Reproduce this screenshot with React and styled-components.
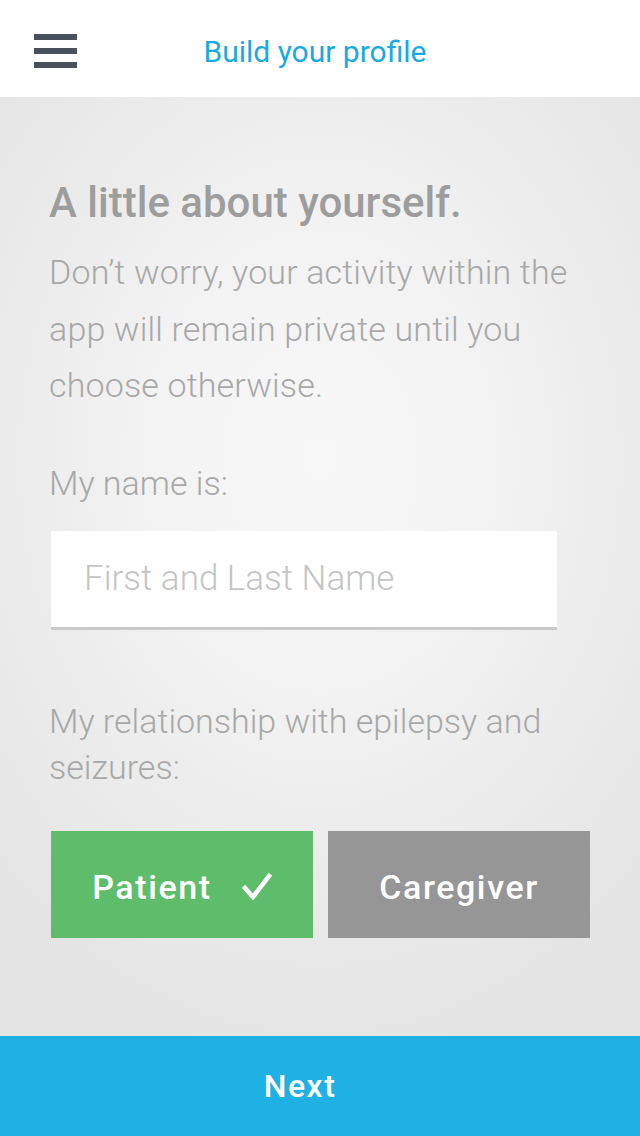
import styled, { createGlobalStyle } from "styled-components";

const Global = createGlobalStyle`
  html, body {
    margin: 0;
    padding: 0;
  }
  body {
    font-family: Roboto, "Noto Sans", sans-serif;
  }
`;

const Screen = styled.div`
  width: 640px;
  height: 1136px;
  display: flex;
  flex-direction: column;
  background: radial-gradient(ellipse 460px 600px at 320px 460px, #f8f8f8 0%, #f2f2f2 40%, #e4e4e4 100%);
  overflow: hidden;
`;

const Header = styled.header`
  height: 97px;
  box-sizing: border-box;
  padding-top: 5px;
  flex: none;
  background: #fff;
  display: flex;
  align-items: center;
`;

const MenuButton = styled.button`
  border: 0;
  background: none;
  padding: 0;
  margin-left: 34px;
  width: 43px;
  height: 34px;
  display: flex;
  flex-direction: column;
  justify-content: space-between;
  cursor: pointer;

  span {
    display: block;
    height: 6px;
    background: #47505b;
  }
`;

const Title = styled.h1`
  margin: 0;
  flex: 1;
  text-align: center;
  padding-right: 87px;
  font-size: 30px;
  font-weight: 400;
  color: #1aa9e1;
`;

const Content = styled.main`
  flex: 1;
  padding: 82px 49px 0 49px;
  display: flex;
  flex-direction: column;
`;

const Heading = styled.h2`
  margin: 0;
  font-size: 42px;
  font-weight: 500;
  color: #9d9d9d;
  line-height: 48px;
`;

const Intro = styled.p`
  margin: 17px 0 0;
  font-size: 34px;
  font-weight: 300;
  line-height: 56.5px;
  letter-spacing: 0.15px;
  color: #a8a8a8;
`;

const Label = styled.label`
  display: block;
  font-size: 34px;
  font-weight: 300;
  color: #a8a8a8;
  line-height: 46px;
  margin-top: ${(p) => p.$top}px;
`;

const NameInput = styled.input`
  display: block;
  box-sizing: border-box;
  margin: 25px 0 0 2px;
  width: 506px;
  height: 99px;
  border: 0;
  border-bottom: 3px solid #cacaca;
  background: #fff;
  padding: 0 33px;
  font-family: Roboto, sans-serif;
  font-size: 35px;
  font-weight: 300;
  color: #555;
  outline: none;

  &::placeholder {
    color: #c4c4c4;
  }
`;

const Choices = styled.div`
  display: grid;
  grid-template-columns: 262px 262px;
  gap: 15px;
  margin: 41px 0 0 2px;
`;

const Choice = styled.button`
  height: 107px;
  border: 0;
  background: ${(p) => (p.$selected ? "#5ebd6b" : "#969696")};
  color: #fff;
  font-family: Roboto, sans-serif;
  font-size: 34px;
  font-weight: 500;
  letter-spacing: 1.6px;
  display: flex;
  align-items: center;
  justify-content: center;
  gap: 30px;
  padding: 5px 0 0;
  cursor: pointer;
`;

const NextBar = styled.button`
  flex: none;
  height: 100px;
  border: 0;
  background: #1fb1e3;
  color: #fff;
  font-family: Roboto, sans-serif;
  font-size: 32px;
  font-weight: 500;
  letter-spacing: 1.5px;
  padding: 0 40px 0 0;
  cursor: pointer;
`;

const Check = () => (
  <svg width="30" height="28" viewBox="0 0 30 28">
    <path d="M3 15 L11 24 L27 3" fill="none" stroke="#fff" strokeWidth="4.5" strokeLinecap="square" />
  </svg>
);

export default function App() {
  return (
    <Screen>
      <Global />
      <Header>
        <MenuButton aria-label="Menu">
          <span />
          <span />
          <span />
        </MenuButton>
        <Title>Build your profile</Title>
      </Header>
      <Content>
        <Heading>A little about yourself.</Heading>
        <Intro>
          Don’t worry, your activity within the app will remain private until you choose otherwise.
        </Intro>
        <Label $top={46} htmlFor="name">My name is:</Label>
        <NameInput id="name" placeholder="First and Last Name" />
        <Label $top={68}>My relationship with epilepsy and seizures:</Label>
        <Choices>
          <Choice $selected>
            Patient <Check />
          </Choice>
          <Choice>Caregiver</Choice>
        </Choices>
      </Content>
      <NextBar>Next</NextBar>
    </Screen>
  );
}
